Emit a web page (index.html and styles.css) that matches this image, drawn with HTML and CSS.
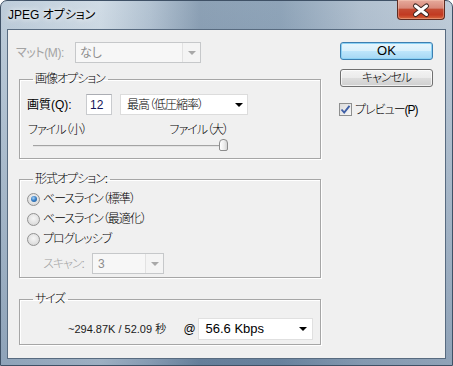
FILE: index.html
```html
<!DOCTYPE html>
<html lang="ja">
<head>
    <meta charset="UTF-8">
    <title>JPEG オプション</title>
    <link rel="stylesheet" href="styles.css">
</head>
<body>

<div class="window">
    <div class="titlebar">
        <span class="title">JPEG オプション</span>
        <div class="close">
            <svg width="46" height="19" viewBox="0 0 46 19">
                <path d="M17.5 6 L28.5 14.5 M28.5 6 L17.5 14.5" stroke="#3a2622" stroke-width="5" stroke-linecap="round"/>
                <path d="M17.5 6 L28.5 14.5 M28.5 6 L17.5 14.5" stroke="#ffffff" stroke-width="3" stroke-linecap="round"/>
            </svg>
        </div>
    </div>

    <div class="client">
        <div class="main">
            <div class="matte-row">
                <span class="label disabled tight">マット(M):</span>
                <div class="combo combo-matte is-disabled">
                    <span class="combo-field">なし</span>
                    <span class="combo-btn"><span class="arrow"></span></span>
                </div>
            </div>

            <fieldset class="group group-quality">
                <legend class="jp">画像オプション</legend>
                <div class="quality-row">
                    <span class="label">画質(Q):</span>
                    <div class="textbox">12</div>
                    <div class="combo combo-quality">
                        <span class="combo-field jp">最高（低圧縮率）</span>
                        <span class="combo-btn"><span class="arrow"></span></span>
                    </div>
                </div>
                <div class="slider-labels jp">
                    <span>ファイル（小）</span>
                    <span>ファイル（大）</span>
                </div>
                <div class="slider">
                    <div class="track"></div>
                    <div class="thumb"></div>
                </div>
            </fieldset>

            <fieldset class="group group-format">
                <legend class="jp">形式オプション:</legend>
                <div class="radio-row">
                    <span class="radio checked"><span class="dot"></span></span>
                    <span class="jp">ベースライン（標準）</span>
                </div>
                <div class="radio-row">
                    <span class="radio"></span>
                    <span class="jp">ベースライン（最適化）</span>
                </div>
                <div class="radio-row">
                    <span class="radio"></span>
                    <span class="jp">プログレッシブ</span>
                </div>
                <div class="scan-row">
                    <span class="label disabled jp">スキャン:</span>
                    <div class="combo combo-scan is-disabled">
                        <span class="combo-field">3</span>
                        <span class="combo-btn"><span class="arrow"></span></span>
                    </div>
                </div>
            </fieldset>

            <fieldset class="group group-size">
                <legend class="jp">サイズ</legend>
                <div class="size-row">
                    <span class="size-text">~294.87K / 52.09 秒</span>
                    <span class="at">@</span>
                    <div class="combo combo-speed">
                        <span class="combo-field">56.6 Kbps</span>
                        <span class="combo-btn"><span class="arrow"></span></span>
                    </div>
                </div>
            </fieldset>
        </div>

        <div class="side">
            <div class="button default">OK</div>
            <div class="button jp">キャンセル</div>
            <div class="check-row">
                <span class="checkbox">
                    <svg width="11" height="11" viewBox="0 0 11 11">
                        <path d="M1.5 5.5 L4.2 8.6 L9.5 1.8" fill="none" stroke="#3f5fa6" stroke-width="1.9"/>
                    </svg>
                </span>
                <span class="jp">プレビュー(P)</span>
            </div>
        </div>
    </div>
</div>

</body>
</html>
```

FILE: styles.css
```css
body {
    margin: 0;
    font-family: "Liberation Sans", "Noto Sans CJK JP", sans-serif;
    font-size: 12px;
    line-height: 14px;
    font-feature-settings: "palt";
    color: #000;
}

/* kana-heavy labels run narrower and lighter in the original UI font */
.jp {
    letter-spacing: -1px;
    font-weight: 300;
}

.tight {
    letter-spacing: -0.4px;
}

.window {
    width: 453px;
    height: 366px;
    box-sizing: border-box;
    display: flex;
    flex-direction: column;
    padding: 0 6px 6px;
    border: 1px solid #3f5166;
    border-radius: 7px 7px 0 0;
    background:
        linear-gradient(180deg, rgba(255, 255, 255, 0.12) 0%, rgba(40, 70, 110, 0.28) 100%),
        linear-gradient(90deg, #b5c6d5 0%, #cad7e2 22%, #a9bbcc 33%, #7d94ab 44%, #8098af 62%, #a7b8c9 80%, #b7c6d4 100%);
}

/* title bar */
.titlebar {
    height: 28px;
    display: flex;
    align-items: center;
    justify-content: space-between;
    padding-left: 1px;
}

.title {
    font-size: 12px;
    text-shadow: 0 0 5px rgba(255, 255, 255, 0.9), 0 0 9px rgba(255, 255, 255, 0.7);
}

.close {
    align-self: flex-start;
    margin-top: -1px;
    margin-right: 1px;
    width: 48px;
    height: 20px;
    box-sizing: border-box;
    border: 1px solid #5e2c22;
    border-top: none;
    border-radius: 0 0 4px 4px;
    background: linear-gradient(180deg, #e6aa9c 0%, #d8897a 42%, #c44a32 50%, #c23a22 78%, #d8683f 100%);
    box-shadow: inset 0 0 0 1px rgba(255, 220, 200, 0.35);
    display: flex;
    justify-content: center;
}

/* client area */
.client {
    flex: 1;
    display: flex;
    padding: 12px 0 0 8px;
    border: 1px solid #586b80;
    background: #f0f0f0;
}

.main {
    width: 305px;
    display: flex;
    flex-direction: column;
}

.side {
    width: 93px;
    margin-left: 19px;
    display: flex;
    flex-direction: column;
}

.label {
    display: inline-block;
}

.disabled {
    color: #a3a3a3;
}

/* matte */
.matte-row {
    display: flex;
    align-items: center;
    height: 21px;
}

.matte-row .label {
    width: 59px;
}

/* combo boxes */
.combo {
    display: flex;
    box-sizing: border-box;
    border: 1px solid #b5b8bd;
    background: #fff;
}

.combo-field {
    flex: 1;
    display: flex;
    align-items: center;
    padding-left: 4px;
}

.combo-btn {
    width: 17px;
    display: flex;
    align-items: center;
    justify-content: center;
}

.arrow {
    width: 0;
    height: 0;
    border-left: 4px solid transparent;
    border-right: 4px solid transparent;
    border-top: 4px solid #000;
}

.combo.is-disabled {
    border-color: #c6c8ca;
    background: #f4f4f4;
}

.combo.is-disabled .combo-field {
    color: #8d8d8d;
    background: #f7f7f7;
    border-right: 1px solid #e2e2e2;
}

.combo.is-disabled .arrow {
    border-top-color: #a8a8a8;
}

.combo-matte {
    width: 126px;
    height: 21px;
}

.combo-quality {
    width: 128px;
    height: 21px;
    margin-left: 8px;
    border-color: #dcdcdc;
}

.combo-quality .combo-field {
    padding-left: 6px;
}

.combo-scan {
    width: 72px;
    height: 21px;
}

.combo-scan .combo-field {
    color: #6b7683;
    padding-left: 5px;
}

.combo-speed {
    width: 115px;
    height: 22px;
    border-color: #e0e0e0;
}

.combo-speed .combo-field {
    font-size: 13px;
    padding-left: 6px;
}

.combo-speed .combo-btn {
    width: 19px;
}

/* group boxes */
.group {
    box-sizing: border-box;
    width: 302px;
    margin: 0 0 0 3px;
    padding: 0 7px 7px;
    min-width: 0;
    border: 1px solid #a6a6a6;
    box-shadow: 1px 1px 0 #fff, inset 1px 1px 0 #fff;
}

.group legend {
    margin-left: 6px;
    padding: 0 3px 0 2px;
    height: 14px;
    line-height: 14px;
}

.group-quality {
    margin-top: 9px;
}

.quality-row {
    display: flex;
    align-items: center;
    height: 21px;
    margin-top: 8px;
}

.quality-row .label {
    width: 59px;
}

.textbox {
    width: 26px;
    height: 21px;
    box-sizing: border-box;
    border: 1px solid #c9cbce;
    border-top-color: #abadb3;
    background: #fff;
    color: #15155a;
    padding-left: 3px;
    display: flex;
    align-items: center;
}

.slider-labels {
    display: flex;
    justify-content: space-between;
    width: 201px;
    margin-top: 8px;
    padding-left: 1px;
    box-sizing: border-box;
}

.slider {
    display: flex;
    align-items: center;
    height: 12px;
    margin: 2px 0 0 6px;
}

.track {
    width: 189px;
    height: 2px;
    margin-top: 2px;
    border-top: 1px solid #a3a3a3;
    background: #e3e3e3;
    box-sizing: border-box;
}

.thumb {
    width: 9px;
    height: 12px;
    margin-left: -3px;
    box-sizing: border-box;
    border: 1px solid #8c8c8c;
    border-radius: 4px 4px 2px 2px;
    background: linear-gradient(90deg, #ffffff 0%, #ececec 60%, #d4d4d4 100%);
}

/* format options */
.group-format {
    margin-top: 13px;
    padding-bottom: 3px;
}

.radio-row {
    display: flex;
    align-items: center;
    height: 20px;
}

.radio-row:first-of-type {
    margin-top: 3px;
}

.radio {
    width: 13px;
    height: 13px;
    box-sizing: border-box;
    margin-right: 3px;
    border: 1px solid #929292;
    border-radius: 50%;
    background: radial-gradient(circle at 50% 40%, #f6f6f6 0%, #e2e2e2 55%, #cfcfcf 100%);
    display: flex;
    align-items: center;
    justify-content: center;
}

.dot {
    width: 6px;
    height: 6px;
    border-radius: 50%;
    background: radial-gradient(circle at 40% 35%, #a9d3f5 0%, #3d83c9 45%, #144f8e 100%);
}

.scan-row {
    display: flex;
    align-items: center;
    height: 21px;
    margin-top: 4px;
    padding-left: 16px;
}

.scan-row .label {
    width: 49px;
}

/* size */
.group-size {
    margin-top: 14px;
    padding-bottom: 4px;
}

.size-row {
    display: flex;
    align-items: center;
    height: 22px;
    margin-top: 12px;
}

.size-text {
    width: 116px;
    margin-left: 41px;
    font-size: 11px;
    color: #1a1a1a;
}

.at {
    width: 15px;
    font-size: 12px;
}

/* buttons */
.button {
    height: 18px;
    box-sizing: border-box;
    border: 1px solid #707070;
    border-radius: 3px;
    background: linear-gradient(180deg, #f3f3f3 0%, #ebebeb 48%, #dddddd 52%, #cfcfcf 100%);
    box-shadow: inset 0 0 0 1px rgba(255, 255, 255, 0.7);
    display: flex;
    align-items: center;
    justify-content: center;
}

.button.default {
    border-color: #3c7fb1;
    background: linear-gradient(180deg, #e8f6fd 0%, #d8f0fc 48%, #bde5fb 52%, #a5d7f4 100%);
    box-shadow: inset 0 0 0 1px #8cd2f5;
    font-size: 13px;
}

.button + .button {
    margin-top: 9px;
}

.check-row {
    display: flex;
    align-items: center;
    height: 13px;
    margin: 16px 0 0 -1px;
}

.checkbox {
    width: 13px;
    height: 13px;
    box-sizing: border-box;
    margin-right: 3px;
    border: 1px solid #8e8f8f;
    background: linear-gradient(135deg, #dcdcdc 0%, #f6f6f6 100%);
    display: flex;
    align-items: center;
    justify-content: center;
}
```
